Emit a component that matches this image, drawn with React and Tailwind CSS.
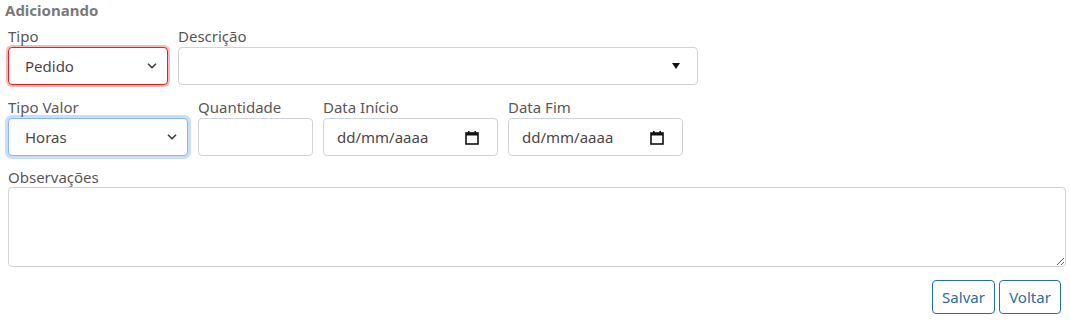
import { ChevronDown } from 'lucide-react';

const font = { fontFamily: '"Noto Sans", "Open Sans", sans-serif' };

function Label({ children }) {
  return <div className="h-5 leading-5 text-[15px] text-[#5b5656] whitespace-nowrap">{children}</div>;
}

function FakeSelect({ value, focus, width }) {
  return (
    <div
      className={`mt-px h-[38px] ${width} flex items-center justify-between rounded-[4px] bg-white pl-4 pr-[8px] text-[15px] text-[#4f4545] ${
        focus === 'red'
          ? 'border border-[#ee1c1c] shadow-[0_0_0_2px_rgba(238,28,28,0.3)]'
          : 'border border-[#86b7fe] shadow-[0_0_0_3px_rgba(100,160,240,0.35)]'
      }`}
    >
      <span>{value}</span>
      <ChevronDown size={14} strokeWidth={3} className="text-[#444]" />
    </div>
  );
}

function DateBox() {
  return (
    <div className="mt-px h-[38px] w-[175px] flex items-center justify-between rounded-[4px] border border-[#ced4da] bg-white pl-[13px] pr-[18px] text-[15px] text-[#4f4545]">
      <span>dd/mm/aaaa</span>
      <svg width="14" height="15" viewBox="0 0 14 15">
        <rect x="1" y="3" width="12" height="11" fill="none" stroke="#111" strokeWidth="1.6" />
        <rect x="1" y="3" width="12" height="2.5" fill="#111" />
        <rect x="3" y="1" width="1.6" height="3" fill="#111" />
        <rect x="9.4" y="1" width="1.6" height="3" fill="#111" />
      </svg>
    </div>
  );
}

export default function App() {
  return (
    <div className="w-[1070px] h-[321px] bg-white overflow-hidden" style={font}>
      {/* Heading */}
      <div className="pl-[5px] h-5 leading-5 text-[15px] font-bold text-[#7a7a7a]">Adicionando</div>

      <div className="pl-2 pr-1">
        {/* Row 1 */}
        <div className="mt-[6px] flex gap-[10px]">
          <div>
            <Label>Tipo</Label>
            <FakeSelect value="Pedido" focus="red" width="w-[160px]" />
          </div>
          <div>
            <Label>Descrição</Label>
            <div className="mt-px h-[38px] w-[520px] flex items-center justify-end rounded-[4px] border border-[#ced4da] bg-white pr-[17px]">
              <svg width="8" height="6" viewBox="0 0 8 6">
                <path d="M0 0 L8 0 L4 6 Z" fill="#111" />
              </svg>
            </div>
          </div>
        </div>

        {/* Row 2 */}
        <div className="mt-3 flex gap-[10px]">
          <div>
            <Label>Tipo Valor</Label>
            <FakeSelect value="Horas" focus="blue" width="w-[180px]" />
          </div>
          <div>
            <Label>Quantidade</Label>
            <div className="mt-px h-[38px] w-[115px] rounded-[4px] border border-[#ced4da] bg-white" />
          </div>
          <div>
            <Label>Data Início</Label>
            <DateBox />
          </div>
          <div>
            <Label>Data Fim</Label>
            <DateBox />
          </div>
        </div>

        {/* Row 3 */}
        <div className="mt-[11px]">
          <Label>Observações</Label>
          <textarea className="block h-20 w-full rounded-[4px] border border-[#ced4da] bg-white resize-y outline-none" />
        </div>

        {/* Actions */}
        <div className="mt-[13px] flex justify-end gap-1 pr-[5px]">
          <button className="h-[34px] w-[63px] rounded-[4px] border border-[#1f6fb5] text-[15px] text-[#2c6ca8] bg-white">Salvar</button>
          <button className="h-[34px] w-[62px] rounded-[4px] border border-[#1f6fb5] text-[15px] text-[#2c6ca8] bg-white">Voltar</button>
        </div>
      </div>
    </div>
  );
}
